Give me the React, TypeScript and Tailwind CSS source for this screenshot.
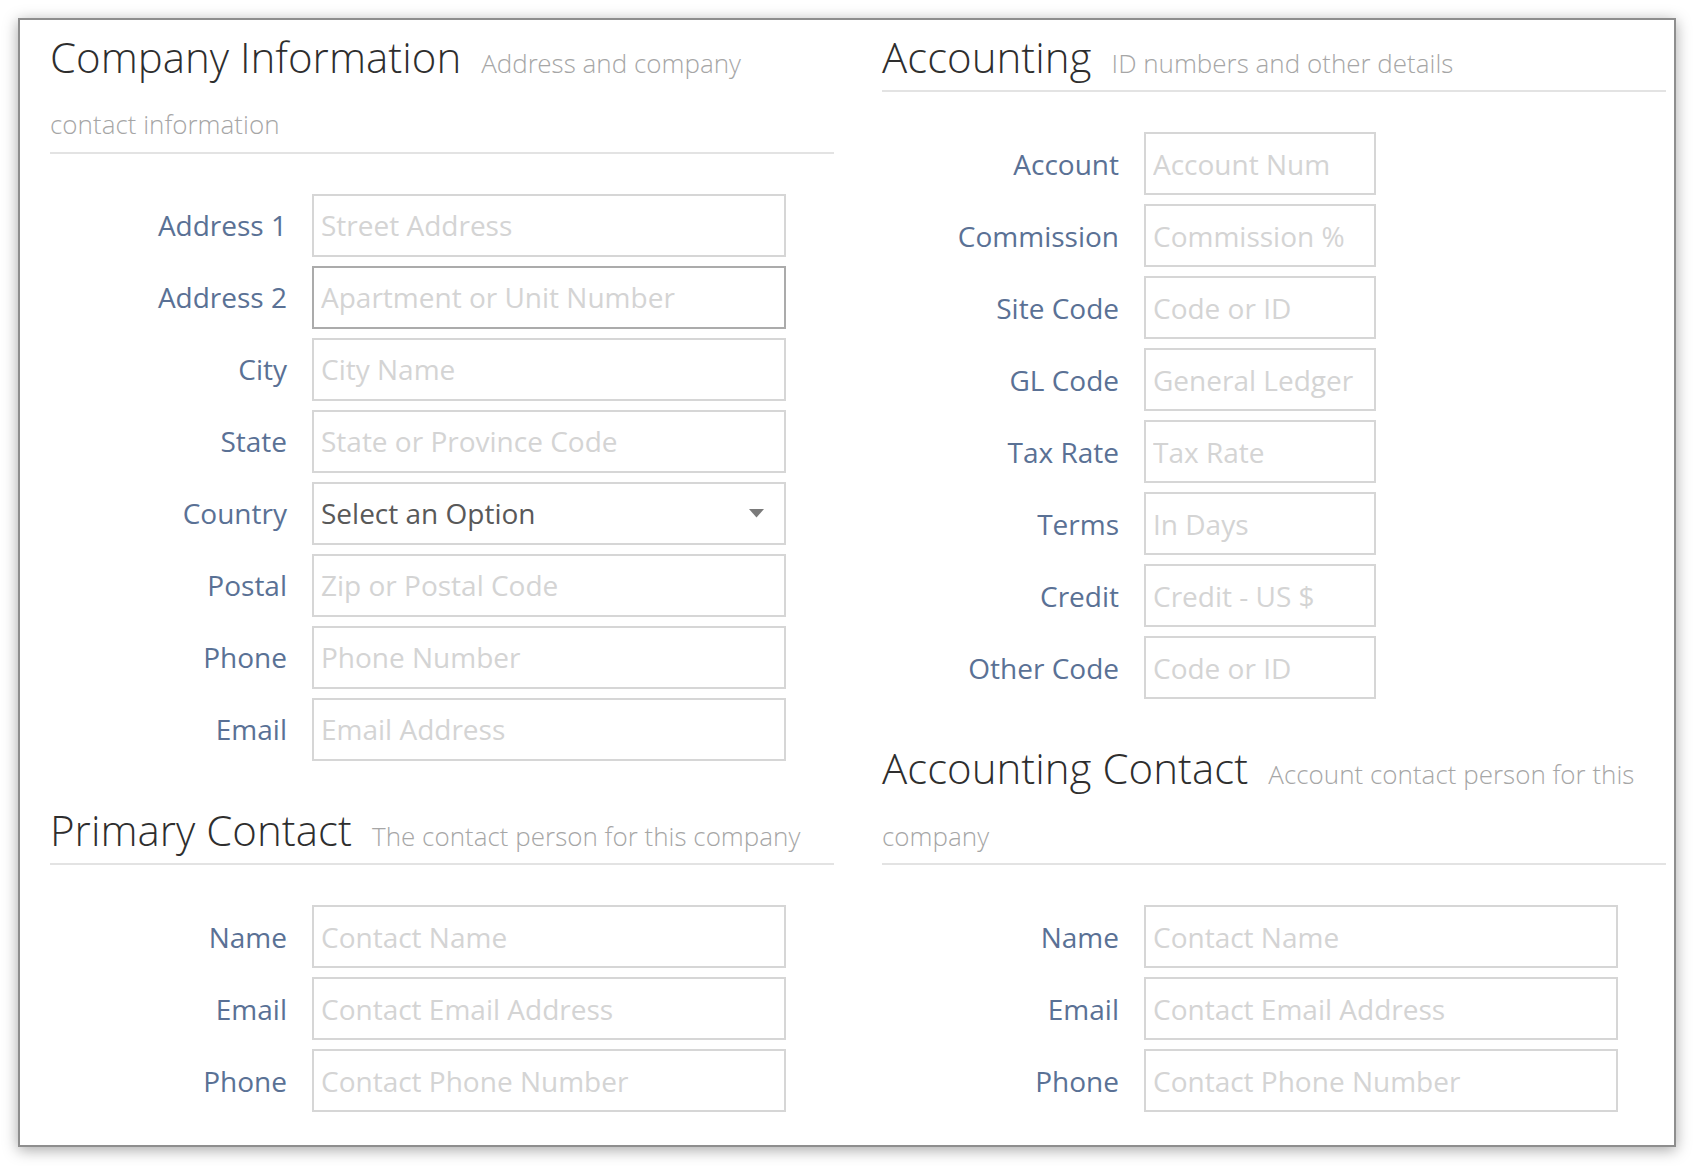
import React from "react";

type RowProps = {
  label: string;
  placeholder?: string;
  small?: boolean;
  focused?: boolean;
  select?: boolean;
};

function Row({ label, placeholder, small, focused, select }: RowProps) {
  const widthCls = small ? "w-[232px]" : "w-[474px]";
  const borderCls = focused ? "border-[#ababab]" : "border-[#d6d6d6]";
  return (
    <div className="flex items-center">
      <label className="w-[237px] shrink-0 text-right text-[28px] leading-none text-[#5a7195]">
        {label}
      </label>
      {select ? (
        <div className={`relative ml-[25px] h-[63px] ${widthCls}`}>
          <select
            className={`h-full w-full appearance-none border-2 ${borderCls} bg-white px-[7px] text-[28px] text-[#595959] outline-none`}
            defaultValue=""
          >
            <option value="">Select an Option</option>
          </select>
          <svg
            className="pointer-events-none absolute right-[22px] top-[27px]"
            width="15"
            height="9"
            viewBox="0 0 15 9"
          >
            <path d="M0 0 L15 0 L7.5 8.5 Z" fill="#7a7a7a" />
          </svg>
        </div>
      ) : (
        <input
          className={`ml-[25px] h-[63px] ${widthCls} border-2 ${borderCls} bg-white px-[7px] text-[28px] text-[#555555] outline-none placeholder:text-[#d4d4d4]`}
          placeholder={placeholder}
        />
      )}
    </div>
  );
}

function Heading({
  title,
  sub,
  sub2,
  first,
}: {
  title: string;
  sub: string;
  sub2?: string;
  first?: boolean;
}) {
  return (
    <h3
      className={`${first ? "mt-[5.5px]" : "mt-[38px]"} border-b-2 border-[#e3e3e3] pb-[3px] font-['Open_Sans_Light','Open_Sans',sans-serif] text-[42px] font-light leading-[61.5px] text-[#2e2e2e]`}
    >
      {title}
      <span className="ml-[20px] text-[26px] font-light leading-none text-[#a6a6a6]">
        {sub}
        {sub2 ? (
          <>
            <br />
            {sub2}
          </>
        ) : null}
      </span>
    </h3>
  );
}

export default function App() {
  return (
    <div className="min-h-[1166px] bg-white pl-[18px] pt-[18px] font-['Open_Sans',sans-serif]">
      <div className="w-[1658px] border-2 border-[#8e8e8e] bg-white pb-[33px] pl-[30px] pr-[8px] shadow-[0_3px_14px_rgba(0,0,0,0.35)]">
        <div className="grid grid-cols-2 gap-x-[48px]">
          <div>
            <Heading
              first
              title="Company Information"
              sub="Address and company"
              sub2="contact information"
            />
            <div className="mt-[40px] flex flex-col gap-[9px]">
              <Row label="Address 1" placeholder="Street Address" />
              <Row label="Address 2" placeholder="Apartment or Unit Number" focused />
              <Row label="City" placeholder="City Name" />
              <Row label="State" placeholder="State or Province Code" />
              <Row label="Country" select />
              <Row label="Postal" placeholder="Zip or Postal Code" />
              <Row label="Phone" placeholder="Phone Number" />
              <Row label="Email" placeholder="Email Address" />
            </div>
            <Heading title="Primary Contact" sub="The contact person for this company" />
            <div className="mt-[40px] flex flex-col gap-[9px]">
              <Row label="Name" placeholder="Contact Name" />
              <Row label="Email" placeholder="Contact Email Address" />
              <Row label="Phone" placeholder="Contact Phone Number" />
            </div>
          </div>
          <div>
            <Heading first title="Accounting" sub="ID numbers and other details" />
            <div className="mt-[40px] flex flex-col gap-[9px]">
              <Row label="Account" placeholder="Account Num" small />
              <Row label="Commission" placeholder="Commission %" small />
              <Row label="Site Code" placeholder="Code or ID" small />
              <Row label="GL Code" placeholder="General Ledger" small />
              <Row label="Tax Rate" placeholder="Tax Rate" small />
              <Row label="Terms" placeholder="In Days" small />
              <Row label="Credit" placeholder="Credit - US $" small />
              <Row label="Other Code" placeholder="Code or ID" small />
            </div>
            <Heading
              title="Accounting Contact"
              sub="Account contact person for this"
              sub2="company"
            />
            <div className="mt-[40px] flex flex-col gap-[9px]">
              <Row label="Name" placeholder="Contact Name" />
              <Row label="Email" placeholder="Contact Email Address" />
              <Row label="Phone" placeholder="Contact Phone Number" />
            </div>
          </div>
        </div>
      </div>
    </div>
  );
}
